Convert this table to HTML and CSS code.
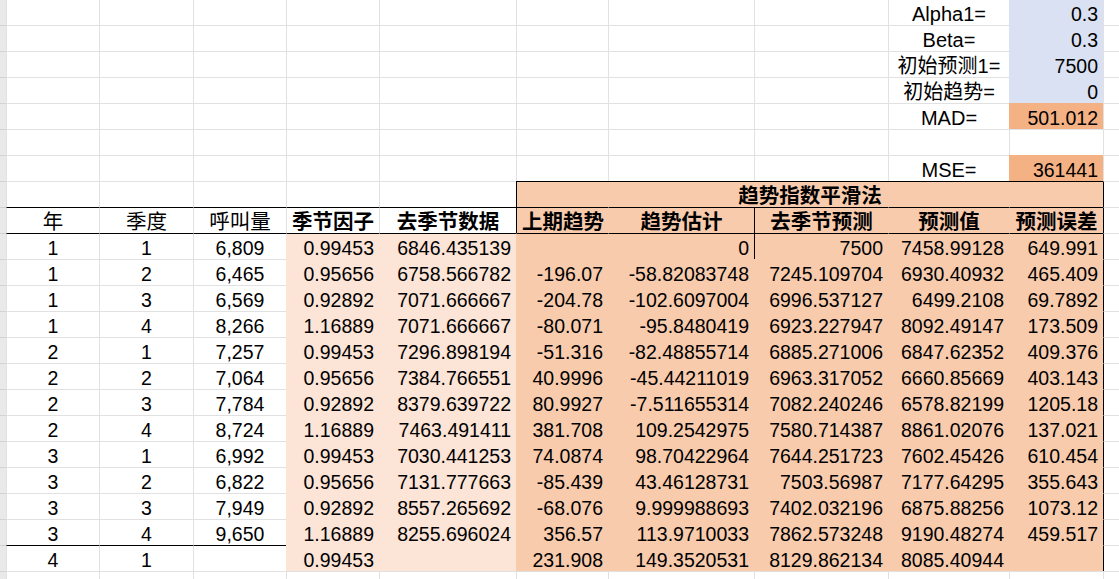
FILE: index.html
```html
<!DOCTYPE html>
<html lang="zh">
<head>
<meta charset="utf-8">
<title>趋势指数平滑法</title>
<link rel="stylesheet" href="styles.css">
</head>
<body>
<div class="sheet">
  <div class="row"><div class="c g"></div><div class="c"></div><div class="c"></div><div class="c"></div><div class="c"></div><div class="c"></div><div class="c"></div><div class="c"></div><div class="c"></div><div class="c m lbl">Alpha1=</div><div class="c r blue">0.3</div><div class="c"></div></div>
  <div class="row"><div class="c g"></div><div class="c"></div><div class="c"></div><div class="c"></div><div class="c"></div><div class="c"></div><div class="c"></div><div class="c"></div><div class="c"></div><div class="c m lbl">Beta=</div><div class="c r blue">0.3</div><div class="c"></div></div>
  <div class="row"><div class="c g"></div><div class="c"></div><div class="c"></div><div class="c"></div><div class="c"></div><div class="c"></div><div class="c"></div><div class="c"></div><div class="c"></div><div class="c m lbl">初始预测1=</div><div class="c r blue">7500</div><div class="c"></div></div>
  <div class="row"><div class="c g"></div><div class="c"></div><div class="c"></div><div class="c"></div><div class="c"></div><div class="c"></div><div class="c"></div><div class="c"></div><div class="c"></div><div class="c m lbl">初始趋势=</div><div class="c r blue">0</div><div class="c"></div></div>
  <div class="row"><div class="c g"></div><div class="c"></div><div class="c"></div><div class="c"></div><div class="c"></div><div class="c"></div><div class="c"></div><div class="c"></div><div class="c"></div><div class="c m lbl">MAD=</div><div class="c r orange">501.012</div><div class="c"></div></div>
  <div class="row"><div class="c g"></div><div class="c"></div><div class="c"></div><div class="c"></div><div class="c"></div><div class="c"></div><div class="c"></div><div class="c"></div><div class="c"></div><div class="c"></div><div class="c"></div><div class="c"></div></div>
  <div class="row"><div class="c g"></div><div class="c"></div><div class="c"></div><div class="c"></div><div class="c"></div><div class="c"></div><div class="c"></div><div class="c"></div><div class="c"></div><div class="c m lbl">MSE=</div><div class="c r orange">361441</div><div class="c"></div></div>

  <div class="row"><div class="c g"></div><div class="c"></div><div class="c"></div><div class="c"></div><div class="c"></div><div class="c"></div><div class="c m hd b p2 bt bl span5">趋势指数平滑法</div><div class="c bl"></div></div>

  <div class="row"><div class="c g"></div><div class="c m hd bt">年</div><div class="c m hd bt">季度</div><div class="c m hd bt">呼叫量</div><div class="c m hd b bt">季节因子</div><div class="c m hd b bt">去季节数据</div><div class="c m hd b p2 bt bl">上期趋势</div><div class="c m hd b p2 bt">趋势估计</div><div class="c m hd b p2 bt bl">去季节预测</div><div class="c m hd b p2 bt">预测值</div><div class="c m hd b p2 bt">预测误差</div><div class="c bl"></div></div>

  <div class="row"><div class="c g"></div><div class="c m bt">1</div><div class="c m bt">1</div><div class="c m bt">6,809</div><div class="c r p1 bt">0.99453</div><div class="c r p1 bt">6846.435139</div><div class="c r p2 bt"></div><div class="c r p2 bt">0</div><div class="c r p2 bt bl">7500</div><div class="c r p2 bt">7458.99128</div><div class="c r p2 bt">649.991</div><div class="c bl"></div></div>
  <div class="row"><div class="c g"></div><div class="c m">1</div><div class="c m">2</div><div class="c m">6,465</div><div class="c r p1">0.95656</div><div class="c r p1">6758.566782</div><div class="c r p2">-196.07</div><div class="c r p2">-58.82083748</div><div class="c r p2">7245.109704</div><div class="c r p2">6930.40932</div><div class="c r p2">465.409</div><div class="c bl"></div></div>
  <div class="row"><div class="c g"></div><div class="c m">1</div><div class="c m">3</div><div class="c m">6,569</div><div class="c r p1">0.92892</div><div class="c r p1">7071.666667</div><div class="c r p2">-204.78</div><div class="c r p2">-102.6097004</div><div class="c r p2">6996.537127</div><div class="c r p2">6499.2108</div><div class="c r p2">69.7892</div><div class="c bl"></div></div>
  <div class="row"><div class="c g"></div><div class="c m">1</div><div class="c m">4</div><div class="c m">8,266</div><div class="c r p1">1.16889</div><div class="c r p1">7071.666667</div><div class="c r p2">-80.071</div><div class="c r p2">-95.8480419</div><div class="c r p2">6923.227947</div><div class="c r p2">8092.49147</div><div class="c r p2">173.509</div><div class="c bl"></div></div>
  <div class="row"><div class="c g"></div><div class="c m">2</div><div class="c m">1</div><div class="c m">7,257</div><div class="c r p1">0.99453</div><div class="c r p1">7296.898194</div><div class="c r p2">-51.316</div><div class="c r p2">-82.48855714</div><div class="c r p2">6885.271006</div><div class="c r p2">6847.62352</div><div class="c r p2">409.376</div><div class="c bl"></div></div>
  <div class="row"><div class="c g"></div><div class="c m">2</div><div class="c m">2</div><div class="c m">7,064</div><div class="c r p1">0.95656</div><div class="c r p1">7384.766551</div><div class="c r p2">40.9996</div><div class="c r p2">-45.44211019</div><div class="c r p2">6963.317052</div><div class="c r p2">6660.85669</div><div class="c r p2">403.143</div><div class="c bl"></div></div>
  <div class="row"><div class="c g"></div><div class="c m">2</div><div class="c m">3</div><div class="c m">7,784</div><div class="c r p1">0.92892</div><div class="c r p1">8379.639722</div><div class="c r p2">80.9927</div><div class="c r p2">-7.511655314</div><div class="c r p2">7082.240246</div><div class="c r p2">6578.82199</div><div class="c r p2">1205.18</div><div class="c bl"></div></div>
  <div class="row"><div class="c g"></div><div class="c m">2</div><div class="c m">4</div><div class="c m">8,724</div><div class="c r p1">1.16889</div><div class="c r p1">7463.491411</div><div class="c r p2">381.708</div><div class="c r p2">109.2542975</div><div class="c r p2">7580.714387</div><div class="c r p2">8861.02076</div><div class="c r p2">137.021</div><div class="c bl"></div></div>
  <div class="row"><div class="c g"></div><div class="c m">3</div><div class="c m">1</div><div class="c m">6,992</div><div class="c r p1">0.99453</div><div class="c r p1">7030.441253</div><div class="c r p2">74.0874</div><div class="c r p2">98.70422964</div><div class="c r p2">7644.251723</div><div class="c r p2">7602.45426</div><div class="c r p2">610.454</div><div class="c bl"></div></div>
  <div class="row"><div class="c g"></div><div class="c m">3</div><div class="c m">2</div><div class="c m">6,822</div><div class="c r p1">0.95656</div><div class="c r p1">7131.777663</div><div class="c r p2">-85.439</div><div class="c r p2">43.46128731</div><div class="c r p2">7503.56987</div><div class="c r p2">7177.64295</div><div class="c r p2">355.643</div><div class="c bl"></div></div>
  <div class="row"><div class="c g"></div><div class="c m">3</div><div class="c m">3</div><div class="c m">7,949</div><div class="c r p1">0.92892</div><div class="c r p1">8557.265692</div><div class="c r p2">-68.076</div><div class="c r p2">9.999988693</div><div class="c r p2">7402.032196</div><div class="c r p2">6875.88256</div><div class="c r p2">1073.12</div><div class="c bl"></div></div>
  <div class="row"><div class="c g"></div><div class="c m">3</div><div class="c m">4</div><div class="c m">9,650</div><div class="c r p1">1.16889</div><div class="c r p1">8255.696024</div><div class="c r p2">356.57</div><div class="c r p2">113.9710033</div><div class="c r p2">7862.573248</div><div class="c r p2">9190.48274</div><div class="c r p2">459.517</div><div class="c bl"></div></div>
  <div class="row"><div class="c g"></div><div class="c m bt">4</div><div class="c m bt">1</div><div class="c m bt"></div><div class="c r p1">0.99453</div><div class="c r p1"></div><div class="c r p2">231.908</div><div class="c r p2">149.3520531</div><div class="c r p2">8129.862134</div><div class="c r p2">8085.40944</div><div class="c r p2"></div><div class="c bl"></div></div>
  <div class="row"><div class="c g"></div><div class="c"></div><div class="c"></div><div class="c"></div><div class="c"></div><div class="c"></div><div class="c"></div><div class="c"></div><div class="c"></div><div class="c"></div><div class="c"></div><div class="c"></div></div>
</div>
</body>
</html>
```

FILE: styles.css
```css
html, body {
  margin: 0;
  padding: 0;
  background: #ffffff;
  overflow: hidden;
}

body {
  font-family: "Liberation Sans", "Noto Sans CJK SC", sans-serif;
  font-size: 19.5px;
  color: #000000;
}

.sheet {
  margin-top: -1px;
}

.row {
  display: grid;
  grid-template-columns: 6px 93px 94px 93px 93px 137px 92px 146px 134px 121px 94px 1fr;
  height: 26px;
}

.c {
  box-sizing: border-box;
  height: 26px;
  min-width: 0;
  border-left: 1px solid #e1e1e1;
  border-top: 1px solid #e1e1e1;
  padding: 3px 5px 0;
  line-height: 22px;
  white-space: nowrap;
}

.g {
  background: #e9e9e9;
  border-left: none;
  border-top-color: #d2d2d2;
  padding: 0;
}

.m { text-align: center; }
.r { text-align: right; }

.lbl { font-size: 20px; }
.hd { font-size: 20.5px; }
.b { font-weight: 700; }

.span5 { grid-column: span 5; }

.blue {
  background: #d9e1f2;
  border-color: transparent;
}

.orange {
  background: #f4b183;
  border-color: transparent;
}

.p1 {
  background: #fce4d6;
  border-color: transparent;
}

.p2 {
  background: #f8cbad;
  border-color: transparent;
}

.bt { border-top-color: #000000; }
.bl { border-left-color: #000000; }
```
